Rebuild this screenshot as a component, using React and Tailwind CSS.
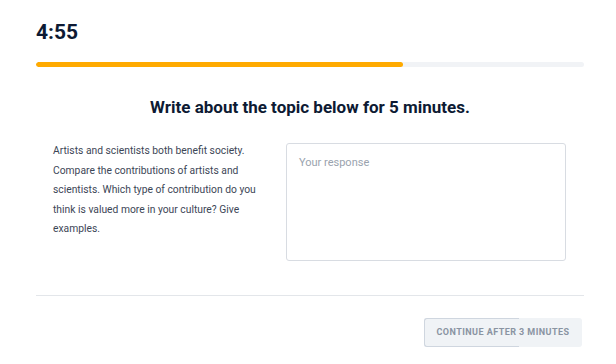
export default function App() {
  return (
    <div className="w-[616px] h-[364px] bg-white overflow-hidden" style={{ fontFamily: 'Roboto, "Noto Sans", sans-serif' }}>
      <div className="ml-9 w-[548px] pt-[19px]">
        <div className="text-[21px] leading-[26px] font-bold text-[#0d1a33]">4:55</div>
        <div className="mt-[17px] h-[5px] rounded-full bg-[#f1f3f6] overflow-hidden">
          <div className="h-full w-[367px] rounded-full bg-[#ffaa00]" />
        </div>
        <h1 className="mt-[29px] text-center text-[17px] leading-[22px] font-bold text-[#0d1a33]">
          Write about the topic below for 5 minutes.
        </h1>
        <div className="mt-[23px] flex items-start gap-[17px] px-[17px]">
          <p className="w-[216px] text-[10.3px] leading-[19.5px] text-[#3c4656]">
            Artists and scientists both benefit society. Compare the contributions of artists and scientists. Which type of contribution do you think is valued more in your culture? Give examples.
          </p>
          <textarea
            placeholder="Your response"
            className="mt-[2px] w-[280px] h-[118px] resize-none rounded-[3px] border border-[#d8dce2] px-3 pt-[11px] text-[11px] leading-[16px] text-[#3c4656] placeholder:text-[#9aa3ae] outline-none"
          />
        </div>
        <div className="mt-[34px] h-px bg-[#e3e6ea]" />
        <div className="mt-[22px] flex justify-end pr-[2px] -mr-[0px]">
          <div className="relative -mr-[0px]">
            <button className="h-[29px] w-[158px] rounded-[3px] bg-[#f0f3f6] text-[9px] font-bold tracking-[0.45px] text-[#8a94a2]">
              CONTINUE AFTER 3 MINUTES
            </button>
            <div className="absolute left-0 top-0 h-[29px] w-[95px] rounded-l-[3px] border-y border-l border-[#cfd6df] pointer-events-none" />
          </div>
        </div>
      </div>
    </div>
  );
}
